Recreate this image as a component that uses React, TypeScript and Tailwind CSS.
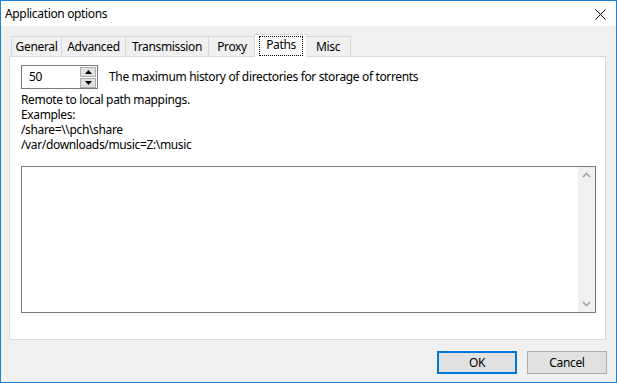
import React from "react";

const tabs = ["General", "Advanced", "Transmission", "Proxy", "Paths", "Misc"];
const tabWidths: Record<string, string> = {
  General: "w-[51px]",
  Advanced: "w-[64px]",
  Transmission: "w-[83px]",
  Proxy: "w-[47px]",
  Paths: "w-[54px]",
  Misc: "w-[45px]",
};

export default function App() {
  return (
    <div
      className="w-[617px] h-[383px] border border-[#1883d7] bg-[#f0f0f0] flex flex-col text-[12px] tracking-[-0.35px] text-black overflow-hidden"
      style={{ fontFamily: '"Noto Sans", "Open Sans", sans-serif' }}
    >
      {/* Title bar */}
      <div className="h-[25px] bg-white flex items-center justify-between pl-[4px] pr-[10px] shrink-0">
        <span className="leading-none mt-[1px]">Application options</span>
        <svg width="11" height="11" viewBox="0 0 11 11" className="mt-[1px]">
          <path d="M0.5 0.5 L10.5 10.5 M10.5 0.5 L0.5 10.5" stroke="#000" strokeWidth="1" />
        </svg>
      </div>

      {/* Tabs */}
      <div className="flex items-end h-[22px] mt-[8px] pl-[10px] shrink-0 relative z-10">
        {tabs.map((t) => {
          const sel = t === "Paths";
          return sel ? (
            <div
              key={t}
              className={`${tabWidths[t]} h-[23px] -mb-px -mx-[2px] bg-white border border-[#d9d9d9] border-b-0 flex items-start justify-center pt-px px-[4px]`}
            >
              <span className="w-full h-[20px] border border-dotted border-black flex items-center justify-center leading-none pb-[2px]">
                {t}
              </span>
            </div>
          ) : (
            <div
              key={t}
              className={`${tabWidths[t]} h-[20px] bg-[#f0f0f0] border border-[#d9d9d9] border-b-0 border-l-0 first:border-l flex items-center justify-center`}
            >
              <span className="leading-none">{t}</span>
            </div>
          );
        })}
      </div>

      {/* Panel */}
      <div className="ml-[8px] mr-[10px] h-[284px] bg-white border border-[#d9d9d9] pt-[8px] pl-[11px] pr-[9px] flex flex-col shrink-0">
        <div className="flex items-center">
          <div className="w-[77px] h-[24px] border border-[#7a7a7a] flex items-center justify-between pl-[7px] pr-[1px]">
            <span className="leading-none">50</span>
            <div className="flex flex-col gap-[1px]">
              <div className="w-[16px] h-[10px] bg-[#e1e1e1] border border-[#adadad] flex items-center justify-center">
                <svg width="7" height="4" viewBox="0 0 7 4"><path d="M0 4 L3.5 0 L7 4 Z" fill="#000" /></svg>
              </div>
              <div className="w-[16px] h-[10px] bg-[#e1e1e1] border border-[#adadad] flex items-center justify-center">
                <svg width="7" height="4" viewBox="0 0 7 4"><path d="M0 0 L3.5 4 L7 0 Z" fill="#000" /></svg>
              </div>
            </div>
          </div>
          <span className="ml-[11px] leading-none">The maximum history of directories for storage of torrents</span>
        </div>

        <div className="mt-[3px] leading-[15px]">
          <div>Remote to local path mappings.</div>
          <div>Examples:</div>
          <div>/share=\\pch\share</div>
          <div>/var/downloads/music=Z:\music</div>
        </div>

        <div className="mt-[14px] h-[147px] border border-[#7a7a7a] bg-white flex justify-end">
          <div className="w-[17px] h-full bg-[#f0f0f0] flex flex-col items-center justify-between py-[5px]">
            <svg width="9" height="6" viewBox="0 0 9 6"><path d="M1 5 L4.5 1.5 L8 5" stroke="#a3a3a3" strokeWidth="1.6" fill="none" /></svg>
            <svg width="9" height="6" viewBox="0 0 9 6"><path d="M1 1 L4.5 4.5 L8 1" stroke="#a3a3a3" strokeWidth="1.6" fill="none" /></svg>
          </div>
        </div>
      </div>

      {/* Buttons */}
      <div className="flex justify-end gap-[10px] mt-[11px] pr-[9px]">
        <button className="w-[80px] h-[23px] bg-[#e1e1e1] border-2 border-[#0078d7] flex items-center justify-center leading-none">
          OK
        </button>
        <button className="w-[80px] h-[23px] bg-[#e1e1e1] border border-[#adadad] flex items-center justify-center leading-none">
          Cancel
        </button>
      </div>
    </div>
  );
}
